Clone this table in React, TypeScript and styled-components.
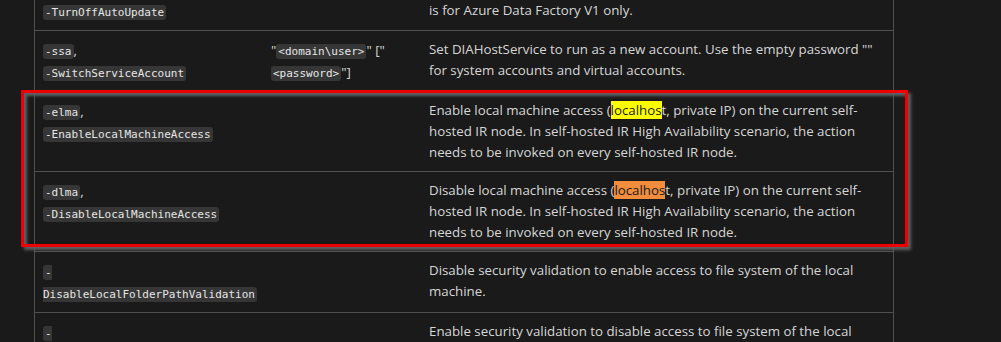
import React from "react";
import styled, { createGlobalStyle } from "styled-components";

const GlobalStyle = createGlobalStyle`
  html, body {
    margin: 0;
    padding: 0;
    background: #1a1a1a;
  }
`;

const Page = styled.div`
  height: 342px;
  overflow: hidden;
  background: #1a1a1a;
  font-family: "Open Sans", "Noto Sans", sans-serif;
  color: #d6d6d6;
`;

const Table = styled.div`
  width: 860px;
  margin: -8px 0 0 34px;
`;

const Row = styled.div`
  display: grid;
  grid-template-columns: 228px 158px 1fr;
  border-left: 1px solid #4f4f4f;
  border-right: 1px solid #4f4f4f;
  border-bottom: 1px solid #4f4f4f;
`;

const Cell = styled.div`
  padding: 8px 8px;
  font-size: 13.3px;
  line-height: 22px;
`;

const DescCell = styled(Cell)`
  line-height: 21px;
`;

const Code = styled.code`
  font-family: "DejaVu Sans Mono", "Liberation Mono", monospace;
  font-size: 11px;
  line-height: 13px;
  color: #e6e6e6;
  background: #363636;
  border-radius: 3px;
  padding: 1px 2px;
`;

// search hit marks, the first one is the active match
const Mark = styled.mark<{ $current?: boolean }>`
  background: ${(p) => (p.$current ? "#ffff00" : "#f28d3e")};
  color: #1a1a1a;
`;

// the red annotation frame drawn over the two rows
const Annotated = styled.div`
  position: relative;

  &::after {
    content: "";
    position: absolute;
    top: -2px;
    left: -13px;
    right: -14px;
    bottom: 5px;
    box-sizing: border-box;
    border: 3px solid #ee0000;
    box-shadow: 3px 3px 3px rgba(100, 100, 100, 0.95),
      inset 3px 3px 3px rgba(100, 100, 100, 0.95);
    pointer-events: none;
  }
`;

const machineText = (verb: string, current: boolean) => (
  <>
    {verb} local machine access (<Mark $current={current}>localhos</Mark>t, private IP) on the current self-
    <br />
    hosted IR node. In self-hosted IR High Availability scenario, the action
    <br />
    needs to be invoked on every self-hosted IR node.
  </>
);

export default function App() {
  return (
    <Page>
      <GlobalStyle />
      <Table>
        <Row>
          <Cell>
            <Code>-TurnOffAutoUpdate</Code>
          </Cell>
          <Cell />
          <DescCell>is for Azure Data Factory V1 only.</DescCell>
        </Row>
        <Row>
          <Cell>
            <Code>-ssa</Code>,<br />
            <Code>-SwitchServiceAccount</Code>
          </Cell>
          <Cell>
            "<Code>&lt;domain\user&gt;</Code>" ["
            <br />
            <Code>&lt;password&gt;</Code>"]
          </Cell>
          <DescCell>
            Set DIAHostService to run as a new account. Use the empty password ""
            <br />
            for system accounts and virtual accounts.
          </DescCell>
        </Row>
        <Annotated>
          <Row>
            <Cell>
              <Code>-elma</Code>,<br />
              <Code>-EnableLocalMachineAccess</Code>
            </Cell>
            <Cell />
            <DescCell>{machineText("Enable", true)}</DescCell>
          </Row>
          <Row>
            <Cell>
              <Code>-dlma</Code>,<br />
              <Code>-DisableLocalMachineAccess</Code>
            </Cell>
            <Cell />
            <DescCell>{machineText("Disable", false)}</DescCell>
          </Row>
        </Annotated>
        <Row>
          <Cell>
            <Code>
              -<br />
              DisableLocalFolderPathValidation
            </Code>
          </Cell>
          <Cell />
          <DescCell>
            Disable security validation to enable access to file system of the local
            <br />
            machine.
          </DescCell>
        </Row>
        <Row>
          <Cell>
            <Code>
              -<br />
              EnableLocalFolderPathValidation
            </Code>
          </Cell>
          <Cell />
          <DescCell>
            Enable security validation to disable access to file system of the local
            <br />
            machine.
          </DescCell>
        </Row>
      </Table>
    </Page>
  );
}
